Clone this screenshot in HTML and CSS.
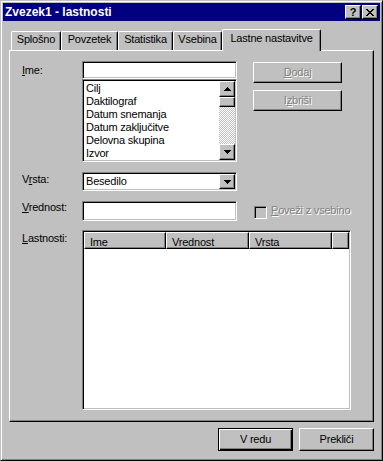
FILE: index.html
```html
<!DOCTYPE html>
<html lang="sl">
<head>
    <meta charset="UTF-8">
    <meta name="viewport" content="width=device-width, initial-scale=1.0">
    <title>Zvezek1 - lastnosti</title>
    <link rel="stylesheet" href="styles.css">
</head>
<body>
    <div class="window">
        <div class="titlebar">
            <span class="title">Zvezek1 - lastnosti</span>
            <div class="caption-buttons">
                <span class="cap-btn cap-help">?</span>
                <span class="cap-btn">
                    <svg width="8" height="7" viewBox="0 0 8 7" shape-rendering="crispEdges">
                        <rect x="0" y="0" width="2" height="1"/><rect x="6" y="0" width="2" height="1"/>
                        <rect x="1" y="1" width="2" height="1"/><rect x="5" y="1" width="2" height="1"/>
                        <rect x="2" y="2" width="4" height="1"/>
                        <rect x="3" y="3" width="2" height="1"/>
                        <rect x="2" y="4" width="4" height="1"/>
                        <rect x="1" y="5" width="2" height="1"/><rect x="5" y="5" width="2" height="1"/>
                        <rect x="0" y="6" width="2" height="1"/><rect x="6" y="6" width="2" height="1"/>
                    </svg>
                </span>
            </div>
        </div>

        <div class="tabs">
            <div class="tab tab-general">Splošno</div>
            <div class="tab tab-summary">Povzetek</div>
            <div class="tab tab-stats">Statistika</div>
            <div class="tab tab-contents">Vsebina</div>
            <div class="tab tab-custom tab-active">Lastne nastavitve</div>
        </div>

        <div class="panel">
            <!-- Ime -->
            <div class="row row-name">
                <div class="label label-name"><u>I</u>me:</div>
                <div class="field">
                    <div class="sunken textbox textbox-name"></div>
                    <div class="sunken listbox">
                        <ul class="items">
                            <li>Cilj</li>
                            <li>Daktilograf</li>
                            <li>Datum snemanja</li>
                            <li>Datum zaključitve</li>
                            <li>Delovna skupina</li>
                            <li>Izvor</li>
                        </ul>
                        <div class="scrollbar">
                            <div class="raised sb-btn">
                                <svg width="7" height="4" viewBox="0 0 7 4" shape-rendering="crispEdges"><path d="M3 0h1v1h1v1h1v1h1v1H0V3h1V2h1V1h1z"/></svg>
                            </div>
                            <div class="raised sb-thumb"></div>
                            <div class="sb-track"></div>
                            <div class="raised sb-btn">
                                <svg width="7" height="4" viewBox="0 0 7 4" shape-rendering="crispEdges"><path d="M0 0h7v1H6v1H5v1H4v1H3V3H2V2H1V1H0z"/></svg>
                            </div>
                        </div>
                    </div>
                </div>
                <div class="side-buttons">
                    <div class="raised btn disabled"><span><u>D</u>odaj</span></div>
                    <div class="raised btn disabled"><span>I<u>z</u>briši</span></div>
                </div>
            </div>

            <!-- Vrsta -->
            <div class="row row-type">
                <div class="label label-type">V<u>r</u>sta:</div>
                <div class="field">
                    <div class="sunken combo">
                        <span class="combo-text">Besedilo</span>
                        <div class="raised combo-btn">
                            <svg width="7" height="4" viewBox="0 0 7 4" shape-rendering="crispEdges"><path d="M0 0h7v1H6v1H5v1H4v1H3V3H2V2H1V1H0z"/></svg>
                        </div>
                    </div>
                </div>
            </div>

            <!-- Vrednost -->
            <div class="row row-value">
                <div class="label label-value"><u>V</u>rednost:</div>
                <div class="field">
                    <div class="sunken textbox textbox-value"></div>
                </div>
                <div class="checkbox-wrap">
                    <span class="sunken checkbox"></span>
                    <span class="disabled checkbox-label"><u>P</u>oveži z vsebino</span>
                </div>
            </div>

            <!-- Lastnosti -->
            <div class="row row-props">
                <div class="label label-props"><u>L</u>astnosti:</div>
                <div class="sunken listview">
                    <div class="lv-header">
                        <div class="raised lv-col lv-col-name">Ime</div>
                        <div class="raised lv-col lv-col-value">Vrednost</div>
                        <div class="raised lv-col lv-col-type">Vrsta</div>
                        <div class="raised lv-col lv-col-rest"></div>
                    </div>
                </div>
            </div>
        </div>

        <div class="footer">
            <div class="raised btn btn-footer btn-default">V redu</div>
            <div class="raised btn btn-footer">Prekliči</div>
        </div>
    </div>
</body>
</html>
```

FILE: styles.css
```css
body {
    margin: 0;
    font-family: "Liberation Sans", Arial, sans-serif;
    font-size: 11px;
    letter-spacing: -0.2px;
    color: #000;
    background-color: #c0c0c0;
}
u {
    text-decoration-thickness: 1px;
    text-underline-offset: 1px;
}
.window {
    width: 383px;
    height: 461px;
    box-sizing: border-box;
    background-color: #c0c0c0;
    border: 1px solid;
    border-color: #c0c0c0 #000 #000 #c0c0c0;
    box-shadow: inset 1px 1px #fff, inset -1px -1px #808080;
    padding: 2px;
    display: flex;
    flex-direction: column;
}

/* title bar */
.titlebar {
    height: 18px;
    flex: none;
    background-color: #000080;
    color: #fff;
    display: flex;
    align-items: center;
    justify-content: space-between;
    padding: 0 2px;
}
.title {
    font-size: 12px;
    font-weight: bold;
    letter-spacing: 0;
    line-height: 18px;
}
.caption-buttons {
    display: flex;
    gap: 1px;
}
.cap-btn {
    width: 16px;
    height: 14px;
    box-sizing: border-box;
    background-color: #c0c0c0;
    border: 1px solid;
    border-color: #fff #000 #000 #fff;
    box-shadow: inset -1px -1px #808080;
    display: flex;
    align-items: center;
    justify-content: center;
    color: #000;
}
.cap-help {
    font-weight: bold;
    font-size: 11px;
    letter-spacing: 0;
    line-height: 12px;
}

/* tabs */
.tabs {
    display: flex;
    align-items: flex-end;
    height: 21px;
    flex: none;
    margin-top: 8px;
    padding-left: 8px;
}
.tab {
    height: 19px;
    box-sizing: border-box;
    border-top: 1px solid #fff;
    border-left: 1px solid #fff;
    border-right: 1px solid #000;
    border-radius: 2px 2px 0 0;
    box-shadow: inset -1px 0 #808080;
    padding-top: 1px;
    line-height: 13px;
    text-align: center;
    white-space: nowrap;
}
.tab-general { width: 50px; }
.tab-summary { width: 57px; }
.tab-stats { width: 55px; }
.tab-contents { width: 49px; }
.tab-custom { width: 99px; }
.tab-active {
    height: 22px;
    margin-bottom: -1px;
    padding-top: 2px;
    position: relative;
    z-index: 1;
    background-color: #c0c0c0;
}

/* tab page */
.panel {
    height: 372px;
    flex: none;
    margin: 0 6px;
    box-sizing: border-box;
    border: 1px solid;
    border-color: #fff #000 #000 #fff;
    box-shadow: inset -1px -1px #808080;
    padding: 10px 0 0 12px;
}
.row {
    display: flex;
    align-items: flex-start;
}
.row-type { margin-top: 10px; }
.row-value { margin-top: 10px; }
.row-props { margin-top: 9px; }
.label {
    width: 60px;
    flex: none;
    line-height: 13px;
}
.label-name { padding-top: 3px; }
.label-type { padding-top: 1px; }
.label-value { padding-top: 0; }
.label-props { padding-top: 2px; }
.field {
    width: 155px;
    flex: none;
}

/* 3d borders */
.sunken {
    box-sizing: border-box;
    border: 1px solid;
    border-color: #808080 #fff #fff #808080;
    box-shadow: inset 1px 1px #000, inset -1px -1px #c0c0c0;
    padding: 1px;
    background-color: #fff;
}
.raised {
    box-sizing: border-box;
    border: 1px solid;
    border-color: #fff #000 #000 #fff;
    box-shadow: inset -1px -1px #808080;
    background-color: #c0c0c0;
}
.disabled {
    color: #808080;
    text-shadow: 1px 1px #fff;
}

.textbox-name { height: 18px; }
.textbox-value { height: 20px; }

.listbox {
    height: 83px;
    display: flex;
}
.items {
    list-style: none;
    margin: 0;
    padding: 1px 0 0 2px;
    flex: 1;
    overflow: hidden;
    line-height: 13px;
    white-space: nowrap;
}
.scrollbar {
    width: 16px;
    flex: none;
    display: flex;
    flex-direction: column;
}
.sb-btn {
    height: 16px;
    flex: none;
    display: flex;
    align-items: center;
    justify-content: center;
}
.sb-thumb {
    height: 10px;
    flex: none;
}
.sb-track {
    flex: 1;
    background: repeating-conic-gradient(#c0c0c0 0 25%, #fff 0 50%) 0 0 / 2px 2px;
}

.side-buttons {
    margin-left: 16px;
    margin-top: 1px;
    display: flex;
    flex-direction: column;
    gap: 7px;
}
.btn {
    height: 21px;
    width: 89px;
    display: flex;
    align-items: center;
    justify-content: center;
    line-height: 13px;
}

.combo {
    height: 19px;
    display: flex;
    align-items: center;
}
.combo-text {
    flex: 1;
    padding-left: 2px;
    line-height: 15px;
}
.combo-btn {
    width: 16px;
    height: 15px;
    flex: none;
    align-self: flex-start;
    display: flex;
    align-items: center;
    justify-content: center;
}

.checkbox-wrap {
    margin-left: 17px;
    display: flex;
    align-items: flex-start;
}
.checkbox {
    width: 13px;
    height: 13px;
    margin-top: 5px;
    background-color: #c0c0c0;
}
.checkbox-label {
    margin-left: 4px;
    padding-top: 3px;
    line-height: 13px;
}

.listview {
    width: 269px;
    height: 180px;
    flex: none;
}
.lv-header {
    display: flex;
    height: 17px;
}
.lv-col {
    height: 17px;
    padding: 3px 0 0 5px;
    line-height: 12px;
    flex: none;
}
.lv-col-name { width: 82px; }
.lv-col-value { width: 83px; }
.lv-col-type { width: 83px; }
.lv-col-rest { flex: 1; }

.footer {
    display: flex;
    justify-content: flex-end;
    gap: 6px;
    margin: 6px 6px 0 0;
}
.btn-footer {
    width: 75px;
    height: 23px;
    padding-bottom: 1px;
}
.btn-default {
    border: 1px solid #000;
    box-shadow: inset 1px 1px #fff, inset -1px -1px #000, inset -2px -2px #808080;
}
```
